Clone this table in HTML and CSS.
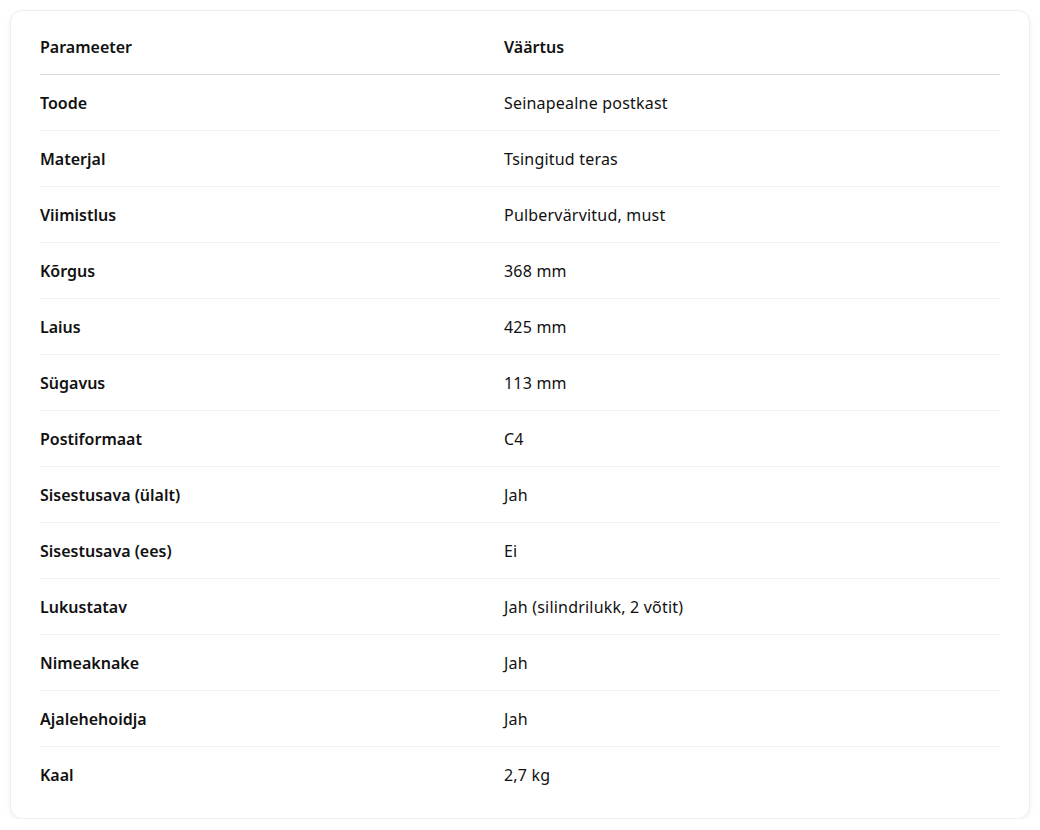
FILE: index.html
```html
<!DOCTYPE html>
<html lang="et">
<head>
<meta charset="utf-8">
<title>Parameetrid</title>
<link rel="stylesheet" href="styles.css">
</head>
<body>
<div class="card">
  <table class="spec">
    <thead>
      <tr><th>Parameeter</th><th>Väärtus</th></tr>
    </thead>
    <tbody>
      <tr><td class="k">Toode</td><td>Seinapealne postkast</td></tr>
      <tr><td class="k">Materjal</td><td>Tsingitud teras</td></tr>
      <tr><td class="k">Viimistlus</td><td>Pulbervärvitud, must</td></tr>
      <tr><td class="k">Kõrgus</td><td>368 mm</td></tr>
      <tr><td class="k">Laius</td><td>425 mm</td></tr>
      <tr><td class="k">Sügavus</td><td>113 mm</td></tr>
      <tr><td class="k">Postiformaat</td><td>C4</td></tr>
      <tr><td class="k">Sisestusava (ülalt)</td><td>Jah</td></tr>
      <tr><td class="k">Sisestusava (ees)</td><td>Ei</td></tr>
      <tr><td class="k">Lukustatav</td><td>Jah (silindrilukk, 2 võtit)</td></tr>
      <tr><td class="k">Nimeaknake</td><td>Jah</td></tr>
      <tr><td class="k">Ajalehehoidja</td><td>Jah</td></tr>
      <tr><td class="k">Kaal</td><td>2,7 kg</td></tr>
    </tbody>
  </table>
</div>
</body>
</html>
```
FILE: styles.css
```css
html, body { margin: 0; padding: 0; background: #ffffff; }
body {
  padding: 10px 10px 0 10px;
  font-family: "Segoe UI", "Noto Sans", "Open Sans", sans-serif;
  color: #111111;
}
.card {
  width: 1020px;
  box-sizing: border-box;
  border: 1px solid #eeeeee;
  border-radius: 12px;
  box-shadow: 0 2px 6px rgba(0,0,0,0.05);
  padding: 8px 29px 16px 29px;
  background: #fff;
}
.spec {
  width: 100%;
  border-collapse: collapse;
  font-size: 16px;
  line-height: 24px;
}
.spec th {
  text-align: left;
  font-weight: 600;
  padding: 16px 0 15px 0;
  border-bottom: 1px solid #d9d9d9;
}
.spec th:first-child, .spec td:first-child { width: 464px; }
.spec td {
  padding: 16px 0 15px 0;
  border-bottom: 1px solid #f1f1f1;
  letter-spacing: 0.2px;
}
.spec tbody tr:last-child td { border-bottom: none; }
.spec td.k { font-weight: 600; letter-spacing: 0; }
```
